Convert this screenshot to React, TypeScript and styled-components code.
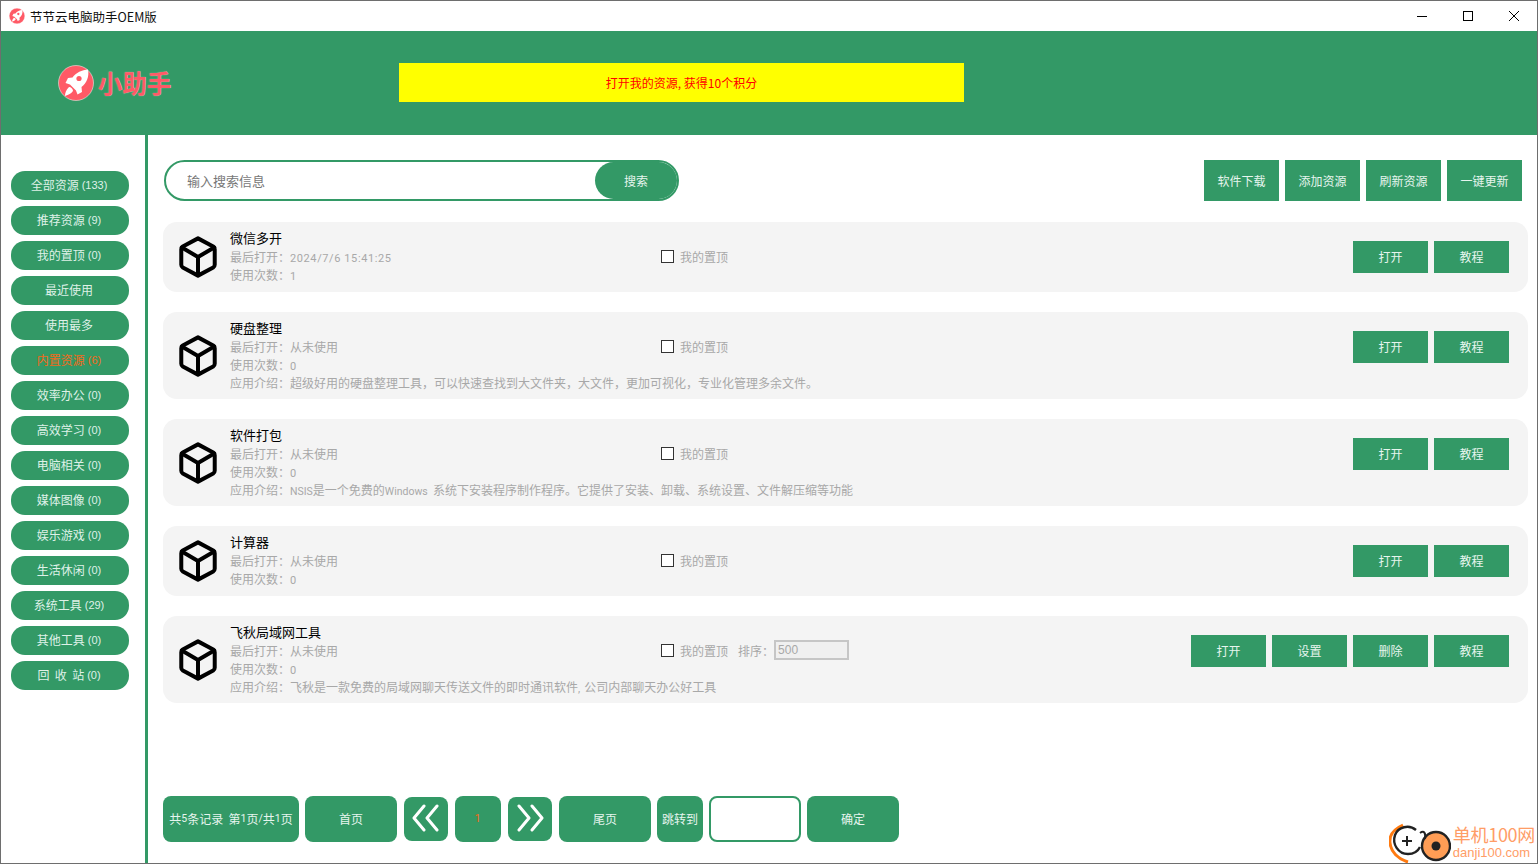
import React from "react";
import styled, { createGlobalStyle } from "styled-components";

const GREEN = "#339966";
const CJK = `"Noto Sans CJK SC", "Noto Sans", sans-serif`;

const GlobalStyle = createGlobalStyle`
    html, body {
        margin: 0;
        padding: 0;
        background: #fff;
    }
    body {
        font-family: ${CJK};
        font-size: 12px;
    }
`;

const Window = styled.div`
    width: 1538px;
    height: 864px;
    box-sizing: border-box;
    border: 1px solid #6e6e6e;
    display: flex;
    flex-direction: column;
    position: relative;
    overflow: hidden;
    background: #fff;
`;

const TitleBar = styled.div`
    height: 30px;
    flex: none;
    display: flex;
    align-items: center;
    padding-left: 8px;
    background: #fff;
`;

const TitleText = styled.span`
    margin-left: 5px;
    font-size: 12.5px;
    color: #111;
`;

const WindowControls = styled.div`
    margin-left: auto;
    display: flex;
`;

const WindowControl = styled.div`
    width: 46px;
    height: 30px;
    display: flex;
    align-items: center;
    justify-content: center;
`;

const Header = styled.div`
    height: 104px;
    flex: none;
    background: ${GREEN};
    display: flex;
    align-items: center;
    padding: 0 0 2px 57px;
    box-sizing: border-box;
`;

const Logo = styled.div`
    width: 341px;
    display: flex;
    align-items: center;
    gap: 4px;
    margin-top: 1px;
`;

const LogoText = styled.span`
    font-size: 24.5px;
    line-height: 36px;
    font-weight: 700;
    color: #ff5a66;
    text-shadow: 0 0 1px #ffffffb0;
`;

const Notice = styled.div`
    width: 565px;
    height: 39px;
    background: #ffff00;
    color: #ff0000;
    font-size: 12px;
    display: flex;
    align-items: center;
    justify-content: center;
`;

const Body = styled.div`
    flex: 1;
    display: flex;
    min-height: 0;
`;

const Sidebar = styled.div`
    flex: none;
    border-right: 3px solid ${GREEN};
    padding: 36px 0 0 10px;
    width: 134px;
    display: flex;
    flex-direction: column;
    gap: 6px;
`;

const NavButton = styled.div<{ $active?: boolean }>`
    width: 118px;
    height: 29px;
    box-sizing: border-box;
    padding: 0 2px 2px 0;
    border-radius: 14px;
    background: ${GREEN};
    color: ${p => (p.$active ? "#f26a1b" : "#dff1e8")};
    font-size: 12px;
    display: flex;
    align-items: center;
    justify-content: center;
`;

const NavLabel = styled.span`
    white-space: pre;
`;

const Count = styled.span`
    font-family: "Liberation Sans", sans-serif;
    font-size: 11px;
    margin-left: 3px;
`;

const Main = styled.div`
    flex: 1;
    min-width: 0;
    display: flex;
    flex-direction: column;
    padding: 25px 9px 21px 15px;
`;

const Toolbar = styled.div`
    display: flex;
    align-items: center;
    padding: 0 6px 0 1px;
    margin-bottom: 21px;
`;

const SearchBox = styled.div`
    width: 515px;
    height: 41px;
    box-sizing: border-box;
    border: 2px solid ${GREEN};
    border-radius: 21px;
    display: flex;
    align-items: center;
    padding-left: 21px;
`;

const Placeholder = styled.span`
    font-size: 13px;
    color: #777;
`;

const SearchButton = styled.div`
    margin-left: auto;
    width: 82px;
    height: 37px;
    border-radius: 19px;
    background: ${GREEN};
    color: #e6f5ee;
    font-size: 12px;
    display: flex;
    align-items: center;
    justify-content: center;
`;

const ToolButtons = styled.div`
    margin-left: auto;
    display: flex;
    gap: 6px;
`;

const ToolButton = styled.div`
    width: 75px;
    height: 41px;
    background: ${GREEN};
    color: #e6f5ee;
    font-size: 12px;
    display: flex;
    align-items: center;
    justify-content: center;
`;

const List = styled.div`
    display: flex;
    flex-direction: column;
    gap: 20px;
`;

const Row = styled.div`
    display: flex;
    align-items: flex-start;
    box-sizing: border-box;
    min-height: 70px;
    background: #f4f4f4;
    border-radius: 14px;
    padding: 7px 19px 7px 16px;
`;

const IconCell = styled.div`
    width: 51px;
    flex: none;
    align-self: stretch;
    display: flex;
    align-items: center;
`;

const Info = styled.div`
    width: 431px;
    flex: none;
    display: flex;
    flex-direction: column;
`;

const ItemTitle = styled.div`
    font-size: 13px;
    line-height: 17px;
    height: 19px;
    color: #000;
`;

const InfoLine = styled.div`
    font-size: 12px;
    line-height: 18px;
    height: 18px;
    color: #a8a8a8;
    white-space: nowrap;
`;

const Latin = styled.span<{ $tight?: boolean }>`
    font-family: Roboto, sans-serif;
    font-size: ${p => (p.$tight ? "10.5px" : "11px")};
    letter-spacing: ${p => (p.$tight ? "0" : "0.6px")};
`;

const PinCell = styled.div`
    margin-top: 12px;
    height: 32px;
    box-sizing: border-box;
    padding-bottom: 2px;
    display: flex;
    align-items: center;
    color: #a8a8a8;
    font-size: 12px;
`;

const Checkbox = styled.span`
    width: 11px;
    height: 11px;
    border: 1px solid #333;
    background: #fff;
    margin-right: 6px;
`;

const SortLabel = styled.span`
    margin-left: 10px;
`;

const SortInput = styled.div`
    width: 71px;
    height: 16px;
    border: 2px solid #c6c6c6;
    background: #f0f0f0;
    line-height: 16px;
    font-size: 12px;
    color: #a8a8a8;
    font-family: "Liberation Sans", sans-serif;
    text-indent: 2px;
`;

const Actions = styled.div`
    margin-left: auto;
    margin-top: 12px;
    display: flex;
    gap: 6px;
`;

const ActionButton = styled.div`
    width: 75px;
    height: 32px;
    box-sizing: border-box;
    padding-bottom: 2px;
    background: ${GREEN};
    color: #e6f5ee;
    font-size: 12px;
    display: flex;
    align-items: center;
    justify-content: center;
`;

const Pager = styled.div`
    margin-top: auto;
    display: flex;
    align-items: center;
    gap: 6px;
`;

const PagerNav = styled.div`
    display: flex;
    align-items: center;
    gap: 7px;
    margin: 0 1px;
`;

const PageButton = styled.div<{ $w: number; $h?: number; $orange?: boolean }>`
    width: ${p => p.$w}px;
    height: ${p => p.$h ?? 46}px;
    box-sizing: border-box;
    padding-bottom: 2px;
    border-radius: 8px;
    background: ${GREEN};
    color: ${p => (p.$orange ? "#f26a1b" : "#e6f5ee")};
    font-size: 12px;
    display: flex;
    align-items: center;
    justify-content: center;
    white-space: nowrap;
    flex: none;
`;

const PageInput = styled.div`
    width: 92px;
    height: 46px;
    box-sizing: border-box;
    border: 2px solid ${GREEN};
    border-radius: 8px;
    background: #fff;
`;

const Watermark = styled.div`
    position: absolute;
    right: 2px;
    bottom: 0;
    display: flex;
    align-items: flex-end;
    gap: 2px;
`;

const WatermarkText = styled.div`
    display: flex;
    flex-direction: column;
    color: #ff9d66;
    padding-bottom: 3px;
`;

const WatermarkName = styled.span`
    font-size: 18px;
    line-height: 20px;
    letter-spacing: -0.3px;
    margin-bottom: 1px;
`;

const WatermarkUrl = styled.span`
    font-family: "Liberation Sans", sans-serif;
    font-size: 13px;
    line-height: 15px;
`;

const Rocket: React.FC<{ size: number }> = ({ size }) => (
    <svg width={size} height={size} viewBox="0 0 36 36" style={{ flex: "none" }}>
        <circle cx="18" cy="18" r="17.5" fill="#ff5a66" stroke="#fff" strokeWidth="0.5" />
        <path
            fill="#fff"
            d="M30 4.5 C31.5 12 28.5 18 23.5 22 L24 27 L19.5 29.5 L18 25.5 L12 19.5 L7.5 18 L10 13 L14.5 12.5 C18 7.5 24 5 30 4.5 Z"
        />
        <path fill="#fff" d="M11 22 C13 22 15 24 15 26 C13 29 9.5 30 7 31 C7 28 8 25 11 22 Z" />
        <circle cx="21" cy="13.5" r="2.6" fill="#ff5a66" />
    </svg>
);

const CubeIcon: React.FC = () => (
    <svg width="38" height="42" viewBox="0 0 40 44" fill="none" stroke="#000" strokeWidth="4.2" strokeLinejoin="round" strokeLinecap="round">
        <path d="M20 2.4 L36 11 C37 11.6 37.6 12.6 37.6 13.8 L37.6 30.2 C37.6 31.4 37 32.4 36 33 L20 41.6 L4 33 C3 32.4 2.4 31.4 2.4 30.2 L2.4 13.8 C2.4 12.6 3 11.6 4 11 Z" />
        <path d="M3 12 L20 22 L37 12" />
        <path d="M20 22 L20 41" />
    </svg>
);

const DoubleChevron: React.FC<{ dir: "left" | "right" }> = ({ dir }) => (
    <svg width="30" height="28" viewBox="0 0 30 28" fill="none" stroke="#fff" strokeWidth="3" strokeLinecap="round" strokeLinejoin="round">
        {dir === "left" ? (
            <>
                <path d="M13 2 L3 14 L13 26" />
                <path d="M26 2 L16 14 L26 26" />
            </>
        ) : (
            <>
                <path d="M4 2 L14 14 L4 26" />
                <path d="M17 2 L27 14 L17 26" />
            </>
        )}
    </svg>
);

const WatermarkLogo: React.FC = () => (
    <svg width="62" height="42" viewBox="0 0 62 42" fill="none">
        <path d="M14 4 C5 8 0 14 1 22 C2 31 9 38 19 41" stroke="#ff7a10" strokeWidth="3" />
        <path d="M27 9 C20 3 9 6 6 14 C3 23 9 33 19 33 C25 33 29 30 31 26" stroke="#222" strokeWidth="2.4" />
        <path d="M18 15 V25 M13 20 H23" stroke="#222" strokeWidth="2" />
        <circle cx="47" cy="25" r="14" fill="#ff9d55" stroke="#222" strokeWidth="2.4" />
        <circle cx="47" cy="25" r="4.5" fill="#222" />
        <path d="M31 12 C35 9 37 12 36 18" stroke="#222" strokeWidth="2" />
    </svg>
);

const navItems: { label: string; count?: string; active?: boolean }[] = [
    { label: "全部资源", count: "(133)" },
    { label: "推荐资源", count: "(9)" },
    { label: "我的置顶", count: "(0)" },
    { label: "最近使用" },
    { label: "使用最多" },
    { label: "内置资源", count: "(6)", active: true },
    { label: "效率办公", count: "(0)" },
    { label: "高效学习", count: "(0)" },
    { label: "电脑相关", count: "(0)" },
    { label: "媒体图像", count: "(0)" },
    { label: "娱乐游戏", count: "(0)" },
    { label: "生活休闲", count: "(0)" },
    { label: "系统工具", count: "(29)" },
    { label: "其他工具", count: "(0)" },
    { label: "回  收  站", count: "(0)" },
];

type Item = {
    title: string;
    lastOpen: React.ReactNode;
    uses: string;
    intro?: React.ReactNode;
    custom?: boolean;
};

const items: Item[] = [
    {
        title: "微信多开",
        lastOpen: <Latin>2024/7/6 15:41:25</Latin>,
        uses: "1",
    },
    {
        title: "硬盘整理",
        lastOpen: "从未使用",
        uses: "0",
        intro: "超级好用的硬盘整理工具，可以快速查找到大文件夹，大文件，更加可视化，专业化管理多余文件。",
    },
    {
        title: "软件打包",
        lastOpen: "从未使用",
        uses: "0",
        intro: (
            <>
                <Latin $tight>NSIS</Latin>是一个免费的<Latin $tight>Windows&nbsp;&nbsp;</Latin>系统下安装程序制作程序。它提供了安装、卸载、系统设置、文件解压缩等功能
            </>
        ),
    },
    {
        title: "计算器",
        lastOpen: "从未使用",
        uses: "0",
    },
    {
        title: "飞秋局域网工具",
        lastOpen: "从未使用",
        uses: "0",
        intro: (
            <>
                飞秋是一款免费的局域网聊天传送文件的即时通讯软件<Latin>,&nbsp;</Latin>公司内部聊天办公好工具
            </>
        ),
        custom: true,
    },
];

export default function App() {
    return (
        <Window>
            <GlobalStyle />
            <TitleBar>
                <Rocket size={16} />
                <TitleText>节节云电脑助手OEM版</TitleText>
                <WindowControls>
                    <WindowControl>
                        <svg width="10" height="10" viewBox="0 0 10 10" stroke="#000" strokeWidth="1">
                            <path d="M0 5.5 H10" />
                        </svg>
                    </WindowControl>
                    <WindowControl>
                        <svg width="10" height="10" viewBox="0 0 10 10" fill="none" stroke="#000" strokeWidth="1">
                            <rect x="0.5" y="0.5" width="9" height="9" />
                        </svg>
                    </WindowControl>
                    <WindowControl>
                        <svg width="10" height="10" viewBox="0 0 10 10" stroke="#000" strokeWidth="1">
                            <path d="M0 0 L10 10 M10 0 L0 10" />
                        </svg>
                    </WindowControl>
                </WindowControls>
            </TitleBar>
            <Header>
                <Logo>
                    <Rocket size={36} />
                    <LogoText>小助手</LogoText>
                </Logo>
                <Notice>打开我的资源, 获得10个积分</Notice>
            </Header>
            <Body>
                <Sidebar>
                    {navItems.map(item => (
                        <NavButton key={item.label} $active={item.active}>
                            <NavLabel>{item.label}</NavLabel>
                            {item.count && <Count>{item.count}</Count>}
                        </NavButton>
                    ))}
                </Sidebar>
                <Main>
                    <Toolbar>
                        <SearchBox>
                            <Placeholder>输入搜索信息</Placeholder>
                            <SearchButton>搜索</SearchButton>
                        </SearchBox>
                        <ToolButtons>
                            <ToolButton>软件下载</ToolButton>
                            <ToolButton>添加资源</ToolButton>
                            <ToolButton>刷新资源</ToolButton>
                            <ToolButton>一键更新</ToolButton>
                        </ToolButtons>
                    </Toolbar>
                    <List>
                        {items.map(item => (
                            <Row key={item.title}>
                                <IconCell>
                                    <CubeIcon />
                                </IconCell>
                                <Info>
                                    <ItemTitle>{item.title}</ItemTitle>
                                    <InfoLine>最后打开：{item.lastOpen}</InfoLine>
                                    <InfoLine>
                                        使用次数：<Latin>{item.uses}</Latin>
                                    </InfoLine>
                                    {item.intro && <InfoLine>应用介绍：{item.intro}</InfoLine>}
                                </Info>
                                <PinCell>
                                    <Checkbox />
                                    我的置顶
                                    {item.custom && (
                                        <>
                                            <SortLabel>排序：</SortLabel>
                                            <SortInput>500</SortInput>
                                        </>
                                    )}
                                </PinCell>
                                <Actions>
                                    <ActionButton>打开</ActionButton>
                                    {item.custom && <ActionButton>设置</ActionButton>}
                                    {item.custom && <ActionButton>删除</ActionButton>}
                                    <ActionButton>教程</ActionButton>
                                </Actions>
                            </Row>
                        ))}
                    </List>
                    <Pager>
                        <PageButton $w={136}>
                            共<Latin $tight>5</Latin>条记录<Latin $tight>&nbsp;&nbsp;</Latin>第<Latin $tight>1</Latin>页<Latin $tight>/</Latin>共<Latin $tight>1</Latin>页
                        </PageButton>
                        <PageButton $w={92}>首页</PageButton>
                        <PagerNav>
                            <PageButton $w={44} $h={44}>
                                <DoubleChevron dir="left" />
                            </PageButton>
                            <PageButton $w={46} $orange>
                                <Latin>1</Latin>
                            </PageButton>
                            <PageButton $w={44} $h={44}>
                                <DoubleChevron dir="right" />
                            </PageButton>
                        </PagerNav>
                        <PageButton $w={92}>尾页</PageButton>
                        <PageButton $w={46}>跳转到</PageButton>
                        <PageInput />
                        <PageButton $w={92}>确定</PageButton>
                    </Pager>
                </Main>
            </Body>
            <Watermark>
                <WatermarkLogo />
                <WatermarkText>
                    <WatermarkName>单机100网</WatermarkName>
                    <WatermarkUrl>danji100.com</WatermarkUrl>
                </WatermarkText>
            </Watermark>
        </Window>
    );
}
